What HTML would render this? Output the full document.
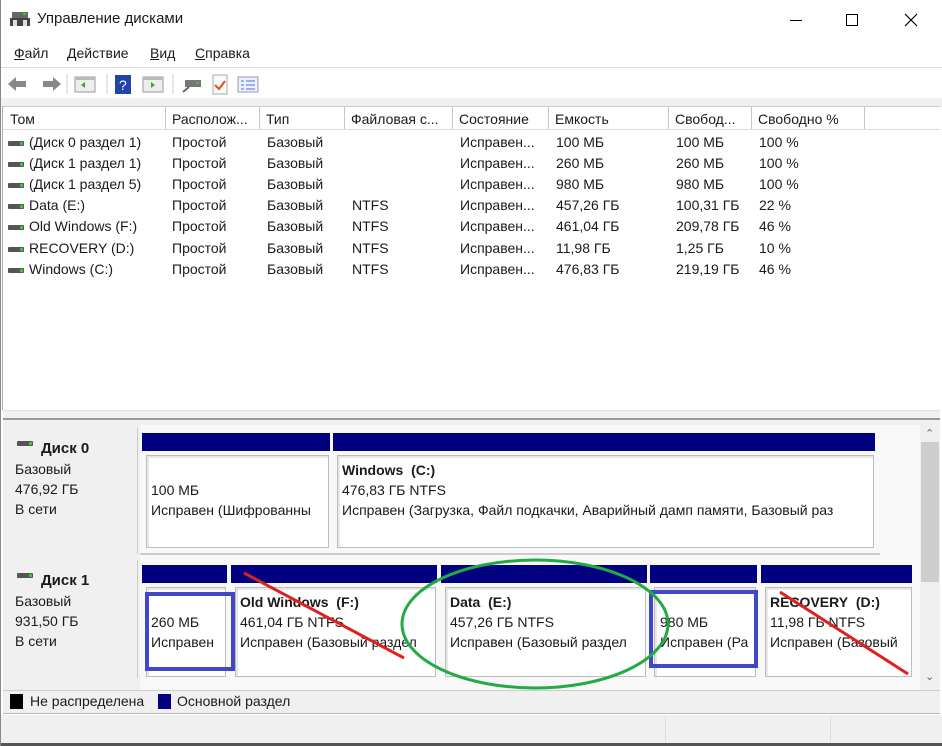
<!DOCTYPE html>
<html><head><meta charset="utf-8"><style>
*{margin:0;padding:0;box-sizing:border-box}
body{width:942px;height:746px;overflow:hidden;background:#fff;font-family:"Segoe UI","Liberation Sans","Noto Sans CJK SC",sans-serif;font-size:14px;color:#1a1a1a;position:relative}
.a{position:absolute;white-space:nowrap}
.hdr{position:absolute;top:107px;height:23px;border-right:1px solid #c8c8c8;background:#fff;padding:4px 0 0 6px}
.row{position:absolute;left:0;width:920px;height:21px}
.row span{position:absolute;top:1px}
.ico{display:inline-block;width:16px;height:5px;background:#555;border-radius:1px;position:absolute;left:8px;top:8px}
.ico:after{content:"";position:absolute;right:1px;top:1px;width:3px;height:3px;background:#3c3}
.bar{position:absolute;height:18px;background:#000080}
.box{position:absolute;background:#fff;border:1px solid #bcbcbc;box-shadow:inset 2px 2px 0 #e8e8e8;padding:3px 0 0 4px;line-height:20px;overflow:hidden;white-space:nowrap}
.lab{position:absolute;left:5px;width:133px;background:#f0f0f0;border-right:1px solid #ccc;padding:10px 0 0 10px;line-height:20px}
b{font-weight:bold}
</style></head><body>
<svg class="a" style="left:10px;top:10px" width="22" height="18"><rect x="2" y="2" width="16" height="6" fill="#666"/><rect x="0" y="8" width="20" height="8" fill="#444"/><rect x="3" y="10" width="4" height="6" fill="#ddd"/><rect x="13" y="10" width="4" height="6" fill="#ddd"/><rect x="13" y="3" width="3" height="2" fill="#3c3"/></svg>
<div class="a" style="left:37px;top:10px;font-size:15px">Управление дисками</div>
<div class="a" style="left:790px;top:20px;width:12px;height:1px;background:#000"></div>
<div class="a" style="left:846px;top:14px;width:12px;height:12px;border:1px solid #000"></div>
<svg class="a" style="left:904px;top:13px" width="14" height="14"><path d="M1 1L13 13M13 1L1 13" stroke="#000" stroke-width="1.2"/></svg>
<div class="a" style="left:14px;top:45px"><u>Ф</u>айл</div>
<div class="a" style="left:67px;top:45px"><u>Д</u>ействие</div>
<div class="a" style="left:150px;top:45px"><u>В</u>ид</div>
<div class="a" style="left:195px;top:45px"><u>С</u>правка</div>
<div class="a" style="left:0;top:67px;width:942px;height:1px;background:#ddd"></div>
<svg class="a" style="left:5px;top:72px" width="260" height="24">
<path d="M3 12L11 5V9H21V15H11V19Z" fill="#888"/><path d="M56 12L48 5V9H38V15H48V19Z" fill="#888"/>
<line x1="62" y1="2" x2="62" y2="22" stroke="#ccc"/>
<rect x="70" y="5" width="20" height="15" fill="#eee" stroke="#999"/><rect x="70" y="5" width="20" height="3" fill="#bbb"/><path d="M80 10L76 13L80 16Z" fill="#3a3"/>
<line x1="102" y1="2" x2="102" y2="22" stroke="#ccc"/>
<rect x="110" y="3" width="16" height="19" fill="#2244aa"/><text x="114" y="18" fill="#fff" font-size="14" font-family="Liberation Sans">?</text>
<rect x="138" y="5" width="20" height="15" fill="#eee" stroke="#999"/><rect x="138" y="5" width="20" height="3" fill="#bbb"/><path d="M146 10L150 13L146 16Z" fill="#3a3"/>
<line x1="168" y1="2" x2="168" y2="22" stroke="#ccc"/>
<rect x="180" y="8" width="16" height="7" fill="#777"/><rect x="191" y="10" width="3" height="2" fill="#3c3"/><line x1="178" y1="20" x2="184" y2="15" stroke="#666" stroke-width="2"/>
<rect x="208" y="3" width="14" height="19" fill="#fafafa" stroke="#aaa"/><path d="M210 13L214 17L220 9" stroke="#e05020" stroke-width="2" fill="none"/>
<rect x="233" y="5" width="20" height="15" fill="#eef" stroke="#99a"/><path d="M236 9h3M236 13h3M236 17h3M241 9h9M241 13h9M241 17h9" stroke="#47c"/>
</svg>
<div class="a" style="left:0;top:98px;width:942px;height:9px;background:#f0f0f0"></div>
<div class="a" style="left:3px;top:106px;width:937px;height:1px;background:#ccc"></div>
<div class="hdr" style="left:4px;width:162px">Том</div>
<div class="hdr" style="left:166px;width:94px">Располож...</div>
<div class="hdr" style="left:260px;width:85px">Тип</div>
<div class="hdr" style="left:345px;width:108px">Файловая с...</div>
<div class="hdr" style="left:453px;width:96px">Состояние</div>
<div class="hdr" style="left:549px;width:120px">Емкость</div>
<div class="hdr" style="left:669px;width:83px">Свобод...</div>
<div class="hdr" style="left:752px;width:113px">Свободно %</div>
<div class="a" style="left:3px;top:129px;width:937px;height:1px;background:#ddd"></div>
<div class="a" style="left:2px;top:106px;width:1px;height:304px;background:#aaa"></div>
<div class="row" style="top:133px"><i class="ico"></i><span style="left:29px">(Диск 0 раздел 1)</span><span style="left:172px">Простой</span><span style="left:267px">Базовый</span><span style="left:460px">Исправен...</span><span style="left:556px">100 МБ</span><span style="left:676px">100 МБ</span><span style="left:759px">100 %</span></div>
<div class="row" style="top:154px"><i class="ico"></i><span style="left:29px">(Диск 1 раздел 1)</span><span style="left:172px">Простой</span><span style="left:267px">Базовый</span><span style="left:460px">Исправен...</span><span style="left:556px">260 МБ</span><span style="left:676px">260 МБ</span><span style="left:759px">100 %</span></div>
<div class="row" style="top:175px"><i class="ico"></i><span style="left:29px">(Диск 1 раздел 5)</span><span style="left:172px">Простой</span><span style="left:267px">Базовый</span><span style="left:460px">Исправен...</span><span style="left:556px">980 МБ</span><span style="left:676px">980 МБ</span><span style="left:759px">100 %</span></div>
<div class="row" style="top:196px"><i class="ico"></i><span style="left:29px">Data (E:)</span><span style="left:172px">Простой</span><span style="left:267px">Базовый</span><span style="left:352px">NTFS</span><span style="left:460px">Исправен...</span><span style="left:556px">457,26 ГБ</span><span style="left:676px">100,31 ГБ</span><span style="left:759px">22 %</span></div>
<div class="row" style="top:217px"><i class="ico"></i><span style="left:29px">Old Windows (F:)</span><span style="left:172px">Простой</span><span style="left:267px">Базовый</span><span style="left:352px">NTFS</span><span style="left:460px">Исправен...</span><span style="left:556px">461,04 ГБ</span><span style="left:676px">209,78 ГБ</span><span style="left:759px">46 %</span></div>
<div class="row" style="top:239px"><i class="ico"></i><span style="left:29px">RECOVERY (D:)</span><span style="left:172px">Простой</span><span style="left:267px">Базовый</span><span style="left:352px">NTFS</span><span style="left:460px">Исправен...</span><span style="left:556px">11,98 ГБ</span><span style="left:676px">1,25 ГБ</span><span style="left:759px">10 %</span></div>
<div class="row" style="top:260px"><i class="ico"></i><span style="left:29px">Windows (C:)</span><span style="left:172px">Простой</span><span style="left:267px">Базовый</span><span style="left:352px">NTFS</span><span style="left:460px">Исправен...</span><span style="left:556px">476,83 ГБ</span><span style="left:676px">219,19 ГБ</span><span style="left:759px">46 %</span></div>
<div class="a" style="left:3px;top:410px;width:937px;height:8px;background:#f0f0f0;border-top:1px solid #ddd"></div>
<div class="a" style="left:3px;top:418px;width:937px;height:2px;background:#999"></div>
<div class="a" style="left:3px;top:420px;width:937px;height:270px;background:#f0f0f0"></div>
<div class="a" style="left:140px;top:425px;width:780px;height:265px;background:#f8f8f8"></div>
<div class="a" style="left:920px;top:425px;width:20px;height:265px;background:#f0f0f0"></div>
<div class="a" style="left:921px;top:442px;width:18px;height:140px;background:#cdcdcd"></div>
<div class="a" style="left:925px;top:427px;font-size:11px;color:#666">&#8963;</div>
<div class="a" style="left:925px;top:670px;font-size:11px;color:#666">&#8964;</div>
<div class="lab" style="top:428px;height:126px"><i class="ico" style="left:12px;top:13px"></i><b style="margin-left:26px;font-size:15px">Диск 0</b><br>Базовый<br>476,92 ГБ<br>В сети</div>
<div class="a" style="left:140px;top:553px;width:740px;height:2px;background:#ccc"></div>
<div class="bar" style="left:142px;top:433px;width:188px"></div>
<div class="bar" style="left:333px;top:433px;width:542px"></div>
<div class="box" style="left:146px;top:455px;width:183px;height:93px;padding-top:24px">100 МБ<br>Исправен (Шифрованны</div>
<div class="box" style="left:337px;top:455px;width:537px;height:93px;padding-top:4px"><b>Windows&nbsp; (C:)</b><br>476,83 ГБ NTFS<br>Исправен (Загрузка, Файл подкачки, Аварийный дамп памяти, Базовый раз</div>
<div class="lab" style="top:560px;height:118px"><i class="ico" style="left:12px;top:13px"></i><b style="margin-left:26px;font-size:15px">Диск 1</b><br>Базовый<br>931,50 ГБ<br>В сети</div>
<div class="bar" style="left:142px;top:565px;width:85px"></div>
<div class="bar" style="left:231px;top:565px;width:206px"></div>
<div class="bar" style="left:441px;top:565px;width:206px"></div>
<div class="bar" style="left:650px;top:565px;width:107px"></div>
<div class="bar" style="left:761px;top:565px;width:151px"></div>
<div class="box" style="left:146px;top:587px;width:80px;height:90px;padding-top:24px;padding-left:4px">260 МБ<br>Исправен</div>
<div class="box" style="left:235px;top:587px;width:201px;height:90px;padding-left:4px;padding-top:4px"><b>Old Windows&nbsp; (F:)</b><br>461,04 ГБ NTFS<br>Исправен (Базовый раздел</div>
<div class="box" style="left:445px;top:587px;width:201px;height:90px;padding-left:4px;padding-top:4px"><b>Data&nbsp; (E:)</b><br>457,26 ГБ NTFS<br>Исправен (Базовый раздел</div>
<div class="box" style="left:654px;top:587px;width:102px;height:90px;padding-top:24px;padding-left:5px">980 МБ<br>Исправен (Ра</div>
<div class="box" style="left:765px;top:587px;width:147px;height:90px;padding-left:4px;padding-top:4px"><b>RECOVERY&nbsp; (D:)</b><br>11,98 ГБ NTFS<br>Исправен (Базовый</div>
<svg class="a" style="left:0;top:0" width="942" height="746">
<rect x="147" y="594" width="86" height="75" fill="none" stroke="#4048c8" stroke-width="4"/>
<rect x="651" y="592" width="105" height="74" fill="none" stroke="#4048c8" stroke-width="4"/>
<ellipse cx="535" cy="624" rx="133" ry="64" fill="none" stroke="#22aa44" stroke-width="3"/>
<line x1="244" y1="573" x2="404" y2="658" stroke="#e02020" stroke-width="3"/>
<line x1="780" y1="592" x2="908" y2="674" stroke="#e02020" stroke-width="3"/>
</svg>
<div class="a" style="left:3px;top:690px;width:937px;height:24px;background:#f0f0f0;border-top:1px solid #ccc;border-bottom:1px solid #bbb"></div>
<div class="a" style="left:10px;top:694px;width:13px;height:15px;background:#000"></div>
<div class="a" style="left:30px;top:693px">Не распределена</div>
<div class="a" style="left:158px;top:694px;width:13px;height:15px;background:#000080"></div>
<div class="a" style="left:177px;top:693px">Основной раздел</div>
<div class="a" style="left:0;top:715px;width:942px;height:28px;background:#f0f0f0"></div>
<div class="a" style="left:665px;top:716px;width:1px;height:26px;background:#ddd"></div>
<div class="a" style="left:830px;top:716px;width:1px;height:26px;background:#ddd"></div>
<div class="a" style="left:0;top:743px;width:942px;height:3px;background:#555"></div>
<div class="a" style="left:0;top:0;width:1px;height:746px;background:#888"></div>
</body></html>
